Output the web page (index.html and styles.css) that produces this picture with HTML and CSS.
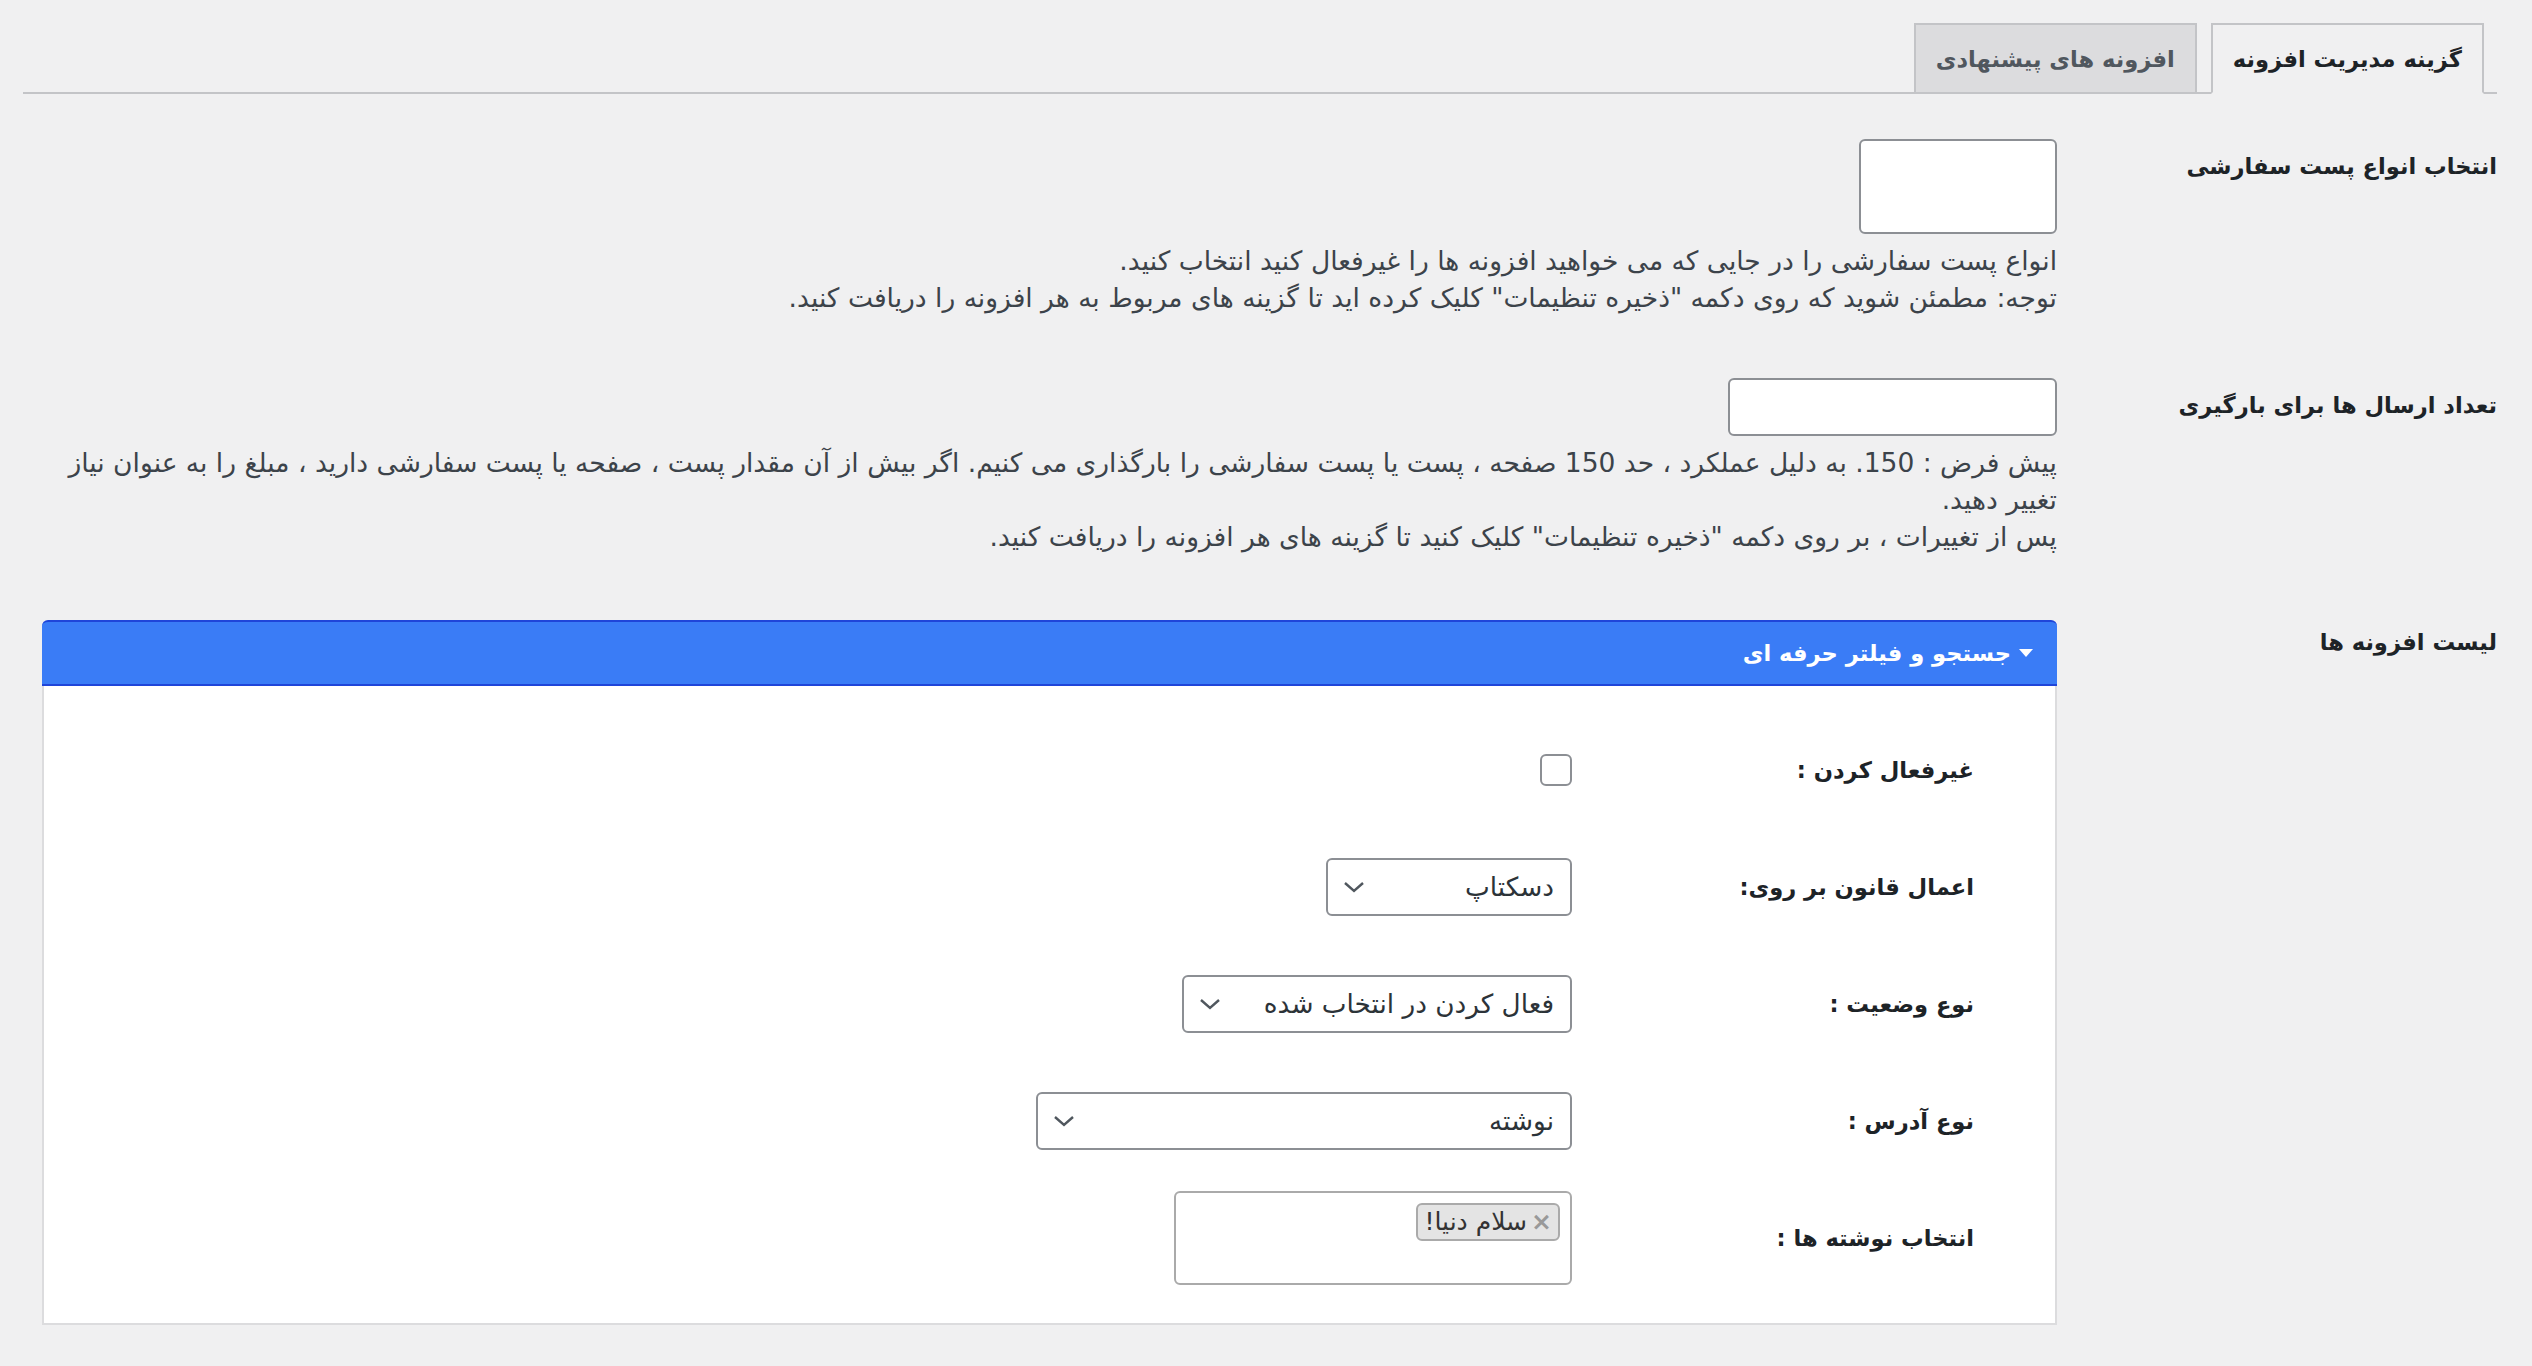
FILE: index.html
```html
<!DOCTYPE html>
<html lang="fa" dir="rtl">
<head>
<meta charset="utf-8">
<title>گزینه مدیریت افزونه</title>
<link rel="stylesheet" href="styles.css">
</head>
<body>
<div class="wrap">
  <nav class="tabs">
    <a class="tab tab-active">گزینه مدیریت افزونه</a>
    <a class="tab">افزونه های پیشنهادی</a>
  </nav>

  <div class="form">
    <div class="row row-types">
      <div class="label">انتخاب انواع پست سفارشی</div>
      <div class="field">
        <div class="box box-types"></div>
        <p class="desc">انواع پست سفارشی را در جایی که می خواهید افزونه ها را غیرفعال کنید انتخاب کنید.<br>توجه: مطمئن شوید که روی دکمه "ذخیره تنظیمات" کلیک کرده اید تا گزینه های مربوط به هر افزونه را دریافت کنید.</p>
      </div>
    </div>

    <div class="row row-count">
      <div class="label">تعداد ارسال ها برای بارگیری</div>
      <div class="field">
        <div class="box box-count"></div>
        <p class="desc">پیش فرض : 150. به دلیل عملکرد ، حد 150 صفحه ، پست یا پست سفارشی را بارگذاری می کنیم. اگر بیش از آن مقدار پست ، صفحه یا پست سفارشی دارید ، مبلغ را به عنوان نیاز تغییر دهید.<br>پس از تغییرات ، بر روی دکمه "ذخیره تنظیمات" کلیک کنید تا گزینه های هر افزونه را دریافت کنید.</p>
      </div>
    </div>

    <div class="row row-list">
      <div class="label">لیست افزونه ها</div>
      <div class="field field-panel">
        <div class="panel">
          <div class="panel-head">
            <svg class="caret" width="14" height="8" viewBox="0 0 14 8"><path d="M0 0 H14 L7 8 Z" fill="#fff"/></svg>
            <span>جستجو و فیلتر حرفه ای</span>
          </div>
          <div class="panel-body">
            <div class="irow">
              <div class="ilabel">غیرفعال کردن :</div>
              <input class="check" type="checkbox">
            </div>
            <div class="irow">
              <div class="ilabel">اعمال قانون بر روی:</div>
              <div class="select sel-device">
                <span>دسکتاپ</span>
                <svg class="chev" width="22" height="14" viewBox="0 0 22 14"><path d="M2 3 L11 11 L20 3" fill="none" stroke="#50575e" stroke-width="2.4"/></svg>
              </div>
            </div>
            <div class="irow">
              <div class="ilabel">نوع وضعیت :</div>
              <div class="select sel-status">
                <span>فعال کردن در انتخاب شده</span>
                <svg class="chev" width="22" height="14" viewBox="0 0 22 14"><path d="M2 3 L11 11 L20 3" fill="none" stroke="#50575e" stroke-width="2.4"/></svg>
              </div>
            </div>
            <div class="irow">
              <div class="ilabel">نوع آدرس :</div>
              <div class="select sel-url">
                <span>نوشته</span>
                <svg class="chev" width="22" height="14" viewBox="0 0 22 14"><path d="M2 3 L11 11 L20 3" fill="none" stroke="#50575e" stroke-width="2.4"/></svg>
              </div>
            </div>
            <div class="irow">
              <div class="ilabel">انتخاب نوشته ها :</div>
              <div class="multi">
                <span class="tag"><span class="tag-x">×</span><span>سلام دنیا!</span></span>
              </div>
            </div>
          </div>
        </div>
      </div>
    </div>
  </div>
</div>
</body>
</html>
```

FILE: styles.css
```css
html, body {
  margin: 0;
  padding: 0;
  background: #f0f0f1;
}

body {
  font-family: "DejaVu Sans", sans-serif;
  font-size: 22.6px;
  color: #3c434a;
}

.wrap {
  padding: 23px 35px 40px 23px;
}

/* tabs */
.tabs {
  display: flex;
  align-items: flex-end;
  gap: 14px;
  padding-right: 13px;
  height: 69px;
  border-bottom: 2px solid #c3c4c7;
}

.tab {
  box-sizing: border-box;
  height: 71px;
  margin-bottom: -2px;
  padding: 0 20px;
  display: flex;
  align-items: center;
  border: 2px solid #c3c4c7;
  background: #dcdcde;
  color: #50575e;
  font-weight: bold;
  font-size: 22.6px;
  white-space: nowrap;
}

.tab-active {
  background: #f0f0f1;
  color: #1d2327;
  border-bottom-color: #f0f0f1;
}

/* form rows */
.form {
  margin-top: 14px;
}

.row {
  display: flex;
  padding: 31px 0;
}

.row-list {
  padding-top: 34px;
}

.label {
  flex: none;
  width: 440px;
  padding-top: 9px;
  line-height: 37px;
  font-weight: bold;
  color: #1d2327;
}

.row-list .label {
  padding-top: 4px;
}

.field {
  flex: 1;
  padding-left: 19px;
}

.box {
  box-sizing: border-box;
  background: #fff;
  border: 2px solid #8c8f94;
  border-radius: 6px;
}

.box-types {
  width: 198px;
  height: 95px;
}

.box-count {
  width: 329px;
  height: 58px;
}

.desc {
  margin: 8px 0 0;
  font-size: 26.5px;
  line-height: 37px;
  color: #3c434a;
}

/* panel */
.panel-head {
  box-sizing: border-box;
  height: 66px;
  display: flex;
  align-items: center;
  gap: 8px;
  padding-right: 24px;
  background: #3a7cf6;
  border-top: 2px solid #1f45d9;
  border-bottom: 2px solid #1f45d9;
  border-radius: 6px 6px 0 0;
  color: #fff;
  font-weight: bold;
}

.caret {
  display: block;
}

.panel-body {
  background: #fff;
  border: 2px solid #dcdcde;
  border-top: none;
  padding: 25px 81px 27px 0;
}

.irow {
  display: flex;
  align-items: center;
  height: 117px;
}

.ilabel {
  flex: none;
  width: 402px;
  font-weight: bold;
  color: #1d2327;
}

.check {
  appearance: none;
  -webkit-appearance: none;
  margin: 0;
  box-sizing: border-box;
  width: 32px;
  height: 32px;
  border: 2px solid #8c8f94;
  border-radius: 6px;
  background: #fff;
}

.select {
  box-sizing: border-box;
  height: 58px;
  display: flex;
  align-items: center;
  justify-content: space-between;
  padding: 0 16px 0 15px;
  background: #fff;
  border: 2px solid #8c8f94;
  border-radius: 6px;
  color: #2c3338;
  font-size: 26.3px;
}

.sel-device { width: 246px; }
.sel-status { width: 390px; }
.sel-url { width: 536px; }

.chev {
  display: block;
}

.multi {
  box-sizing: border-box;
  width: 398px;
  height: 94px;
  padding: 10px 10px;
  background: #fff;
  border: 2px solid #aaaaaa;
  border-radius: 6px;
}

.tag {
  box-sizing: border-box;
  display: inline-flex;
  align-items: center;
  gap: 4px;
  height: 38px;
  padding: 0 6px;
  background: #e4e4e4;
  border: 2px solid #aaaaaa;
  border-radius: 6px;
  color: #333;
  font-size: 25px;
}

.tag-x {
  color: #999;
  font-weight: bold;
}
```
